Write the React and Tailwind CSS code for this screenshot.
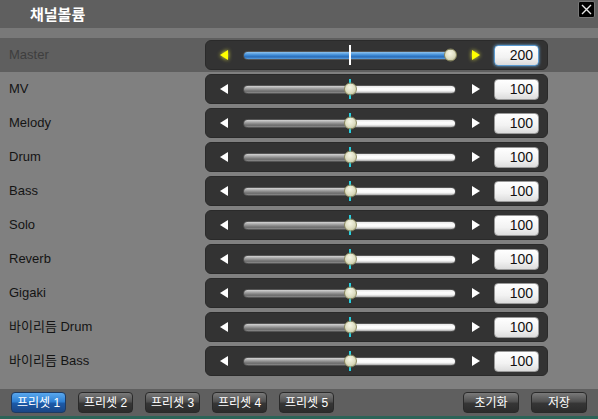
import React from 'react';

const channels = [
  { name: 'MV', value: 100 },
  { name: 'Melody', value: 100 },
  { name: 'Drum', value: 100 },
  { name: 'Bass', value: 100 },
  { name: 'Solo', value: 100 },
  { name: 'Reverb', value: 100 },
  { name: 'Gigaki', value: 100 },
  { name: '바이리듬 Drum', value: 100 },
  { name: '바이리듬 Bass', value: 100 },
];

const presets = ['프리셋 1', '프리셋 2', '프리셋 3', '프리셋 4', '프리셋 5'];

function Slider({ fill, master }) {
  return (
    <div className="relative w-[213px] h-full flex items-center">
      <div className="relative w-full h-[9px] rounded-full overflow-hidden flex border border-[#555]">
        {master ? (
          <div
            className="h-full bg-[linear-gradient(to_bottom,#8ec4f0,#3d8ad6_45%,#2a6cb8_70%,#5aa0e0)]"
            style={{ width: fill }}
          />
        ) : (
          <>
            <div
              className="h-full bg-[linear-gradient(to_bottom,#d4d4d4,#9a9a9a_40%,#6c6c6c_75%,#8a8a8a)]"
              style={{ width: fill }}
            />
            <div className="h-full flex-1 bg-[linear-gradient(to_bottom,#e8e8e8,#ffffff_40%,#f4f4f4_70%,#a8a8a8)]" />
          </>
        )}
      </div>
      <div
        className={`absolute left-[106px] top-[4px] bottom-[4px] w-[2px] ${master ? 'bg-white' : 'bg-[#26d0e0]'}`}
      />
      <div
        className="absolute top-1/2 -translate-y-1/2 w-[13px] h-[13px] rounded-full border border-[#8c8a60] bg-[radial-gradient(circle_at_45%_35%,#f6f6e6,#dcdcc0_55%,#b0ae88)]"
        style={{ left: fill - 6.5 }}
      />
    </div>
  );
}

function Panel({ value, fill, master }) {
  const arrow = master ? 'drop-shadow-[0_0_2px_#ffff40]' : '';
  return (
    <div className="w-[343px] h-[30px] rounded-[6px] bg-[#333333] border border-[#2a2a2a] flex items-center pl-[14px]">
      <div
        className={`w-0 h-0 border-y-[5px] border-y-transparent border-r-[8px] ${master ? 'border-r-[#ffff00]' : 'border-r-white'} ${arrow}`}
      />
      <div className="ml-[15px] h-full">
        <Slider fill={fill} master={master} />
      </div>
      <div
        className={`ml-[16px] w-0 h-0 border-y-[5px] border-y-transparent border-l-[8px] ${master ? 'border-l-[#ffff00]' : 'border-l-white'} ${arrow}`}
      />
      <div
        className={`ml-[14px] w-[45px] h-[21px] rounded-[4px] flex items-center justify-end pr-[5px] text-[14px] text-[#111] bg-[linear-gradient(to_bottom,#ffffff,#f2f2f2_60%,#dcdcdc)] ${
          master ? 'border border-[#5a9ad0] shadow-[0_0_3px_#6ab0e8] text-[#1a2438]' : 'border border-[#9a9a9a]'
        }`}
      >
        {value}
      </div>
    </div>
  );
}

function Button({ label, active, wide }) {
  return (
    <button
      className={`h-[21px] w-[55px] rounded-[4px] text-[12px] text-white flex items-center justify-center border ${
        active
          ? 'border-[#1e3a62] bg-[linear-gradient(to_bottom,#5aa8ee,#2e80d4_45%,#1c5aa8_55%,#1a4686)]'
          : 'border-[#2a2a2a] bg-[linear-gradient(to_bottom,#7a7a7a,#505050_45%,#363636_55%,#2c2c2c)]'
      } ${wide ? 'w-[56px]' : ''}`}
    >
      {label}
    </button>
  );
}

export default function App() {
  return (
    <div className="w-[598px] h-[419px] bg-[#808080] flex flex-col font-['Liberation_Sans','Noto_Sans_CJK_KR',sans-serif] overflow-hidden">
      <div className="h-[28px] bg-[#5f5f5f] flex items-center justify-between pl-[30px] pr-[3px]">
        <span className="text-white font-bold text-[15px] font-['Noto_Sans_CJK_KR',sans-serif]">채널볼륨</span>
        <button className="w-[17px] h-[17px] -mt-[9px] rounded-[2px] bg-black border border-[#777] flex items-center justify-center">
          <svg width="11" height="11" viewBox="0 0 11 11">
            <path d="M1 1L10 10M10 1L1 10" stroke="#e8e8e8" strokeWidth="1.4" />
          </svg>
        </button>
      </div>
      <div className="h-[10px] bg-[#797979]" />
      <div className="h-[34px] bg-[#5f5f5f] flex items-center pl-[9px]">
        <span className="w-[196px] text-[13px] text-[#3e3e3e]">Master</span>
        <Panel value={200} fill={207} master />
      </div>
      {channels.map((c) => (
        <div key={c.name} className="h-[34px] flex items-center pl-[9px]">
          <span className="w-[196px] text-[13px] text-[#141414]">{c.name}</span>
          <Panel value={c.value} fill={107} />
        </div>
      ))}
      <div className="mt-auto h-[27px] bg-[#5f5f5f] flex items-center px-[11px] gap-[12px]">
        {presets.map((p, i) => (
          <Button key={p} label={p} active={i === 0} />
        ))}
        <div className="flex-1" />
        <Button label="초기화" wide />
        <Button label="저장" wide />
      </div>
      <div className="h-[3px] bg-[#2c6458]" />
    </div>
  );
}
